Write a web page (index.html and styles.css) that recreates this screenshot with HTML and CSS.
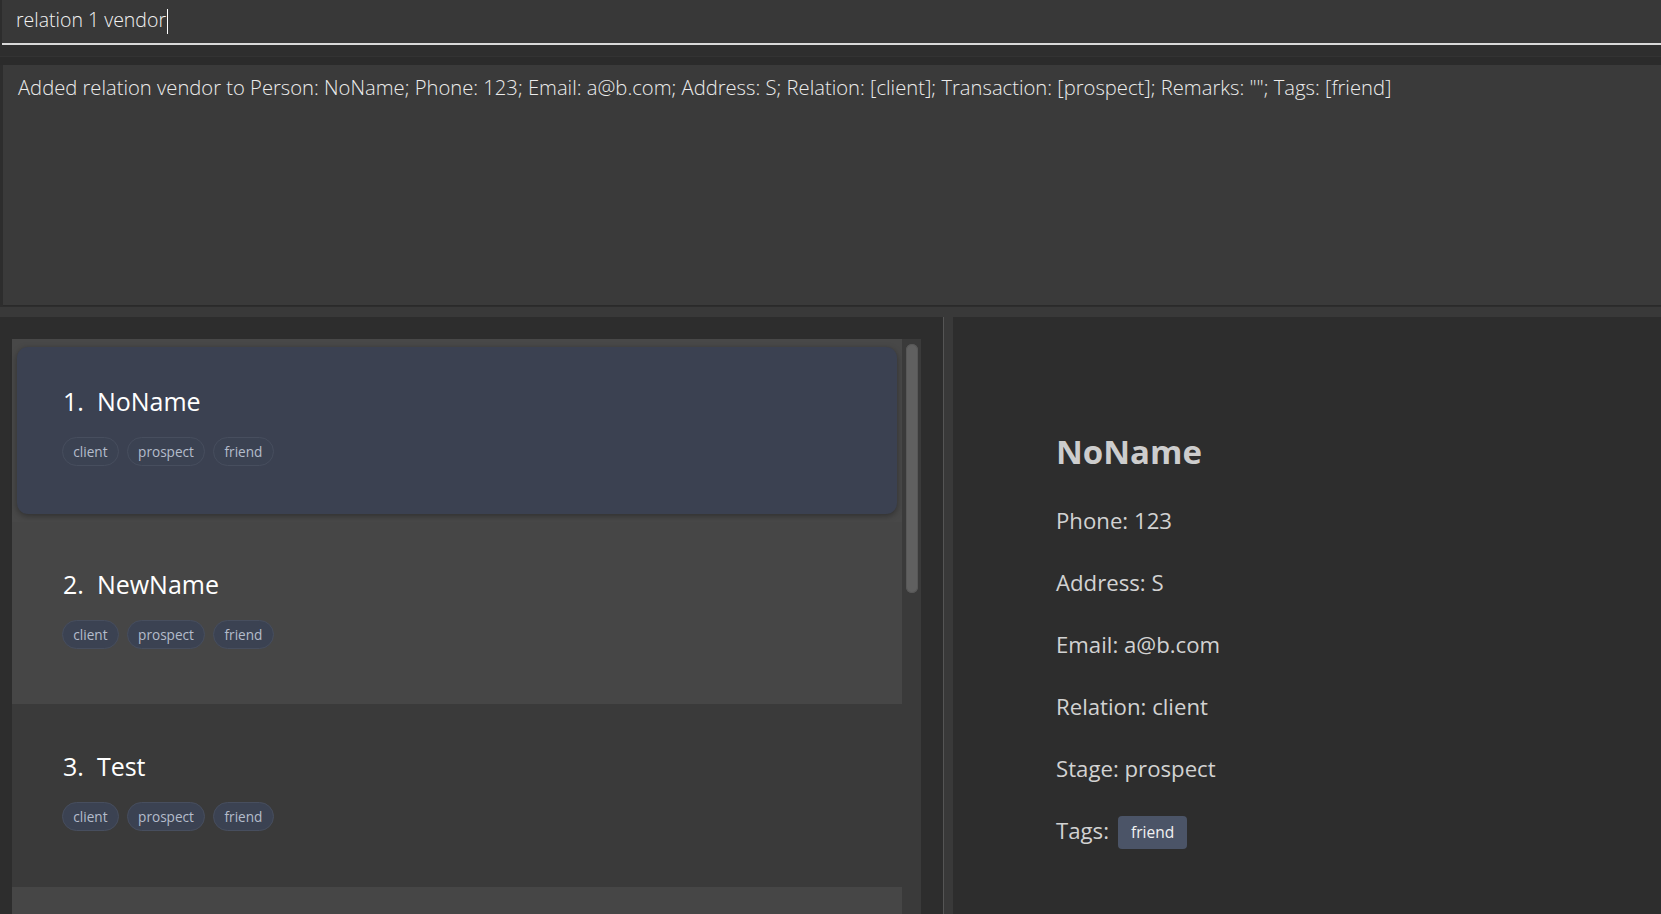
FILE: index.html
```html
<!DOCTYPE html>
<html>
<head>
<meta charset="utf-8">
<link rel="stylesheet" href="styles.css">
</head>
<body>
<div class="app">
  <div class="command-box">
    <span class="command-text">relation 1 vendor</span><span class="caret"></span>
  </div>
  <div class="command-gap"></div>
  <div class="result-wrap">
    <div class="result-box">Added relation vendor to Person: NoName; Phone: 123; Email: a@b.com; Address: S; Relation: [client]; Transaction: [prospect]; Remarks: ""; Tags: [friend]</div>
  </div>
  <div class="split-band"></div>
  <div class="main">
    <div class="left-panel">
      <div class="list-view">
        <div class="cells">
          <div class="cell cell-selected">
            <div class="card card-selected">
              <div class="title"><span class="index">1.</span><span class="name">NoName</span></div>
              <div class="tags">
                <span class="tag">client</span><span class="tag">prospect</span><span class="tag">friend</span>
              </div>
            </div>
          </div>
          <div class="cell cell-even">
            <div class="card">
              <div class="title"><span class="index">2.</span><span class="name">NewName</span></div>
              <div class="tags">
                <span class="tag">client</span><span class="tag">prospect</span><span class="tag">friend</span>
              </div>
            </div>
          </div>
          <div class="cell cell-odd">
            <div class="card">
              <div class="title"><span class="index">3.</span><span class="name">Test</span></div>
              <div class="tags">
                <span class="tag">client</span><span class="tag">prospect</span><span class="tag">friend</span>
              </div>
            </div>
          </div>
          <div class="cell cell-even"></div>
        </div>
        <div class="scroll-track"><div class="scroll-thumb"></div></div>
      </div>
    </div>
    <div class="divider"></div>
    <div class="right-panel">
      <div class="details">
        <div class="detail-name">NoName</div>
        <div class="detail-row">Phone: 123</div>
        <div class="detail-row">Address: S</div>
        <div class="detail-row">Email: a@b.com</div>
        <div class="detail-row">Relation: client</div>
        <div class="detail-row">Stage: prospect</div>
        <div class="detail-row detail-tags">Tags: <span class="detail-tag">friend</span></div>
      </div>
    </div>
  </div>
</div>
</body>
</html>
```

FILE: styles.css
```css
html, body {
  margin: 0;
  padding: 0;
  background: #2d2d2d;
  overflow: hidden;
}
.app {
  width: 1661px;
  height: 914px;
  display: flex;
  flex-direction: column;
  font-family: "Open Sans", "Noto Sans", sans-serif;
  color: #ffffff;
  overflow: hidden;
}
.command-box {
  height: 45px;
  box-sizing: border-box;
  background: #383838;
  border-bottom: 2px solid #d9d9d9;
  margin-left: 2px;
  padding: 6px 0 0 14px;
  display: flex;
  align-items: flex-start;
  flex-shrink: 0;
}
.command-text {
  font-size: 19.5px;
  font-weight: 300;
  line-height: 27px;
  color: #f2f2f2;
}
.caret {
  width: 1px;
  height: 25px;
  margin-top: 3px;
  margin-left: 1px;
  background: #ffffff;
}
.command-gap {
  height: 20px;
  flex-shrink: 0;
  background: #2b2b2b;
  border-top: 11px solid #2e2e2e;
  box-sizing: border-box;
  box-shadow: inset 0 1px 0 #333333;
}
.result-wrap {
  height: 242px;
  flex-shrink: 0;
  padding-left: 3px;
  background: #2d2d2d;
}
.result-box {
  height: 241px;
  background: #3a3a3a;
  box-sizing: border-box;
  padding: 8px 0 0 15px;
  font-size: 20.2px;
  font-weight: 300;
  line-height: 29px;
  color: #ececec;
  white-space: nowrap;
  border-bottom: 1px solid #2a2a2a;
}
.split-band {
  height: 10px;
  flex-shrink: 0;
  background: #393939;
}
.main {
  flex: 1;
  display: flex;
  min-height: 0;
}
.left-panel {
  width: 943px;
  flex-shrink: 0;
  box-sizing: border-box;
  padding: 22px 0 0 12px;
  background: #2d2d2d;
}
.list-view {
  display: flex;
  width: 909px;
  height: 100%;
}
.cells {
  width: 890px;
  display: flex;
  flex-direction: column;
}
.cell {
  height: 182.7px;
  flex-shrink: 0;
  box-sizing: border-box;
  padding: 8px 5px;
}
.cell-selected {
  background: #484848;
}
.cell-even {
  background: #464646;
}
.cell-odd {
  background: #3a3a3a;
}
.card {
  height: 100%;
  box-sizing: border-box;
  padding: 37px 45px 0 45px;
  border-radius: 11px;
}
.card-selected {
  background: #3b4151;
  box-shadow: 0 2px 6px rgba(0, 0, 0, 0.35);
}
.title {
  display: flex;
  font-size: 25px;
  line-height: 34px;
  color: #ffffff;
  padding-left: 1px;
}
.index {
  margin-right: 13px;
}
.tags {
  display: flex;
  gap: 8px;
  margin-top: 19px;
}
.tag {
  height: 29px;
  box-sizing: border-box;
  padding: 0 10.3px;
  border-radius: 15px;
  border: 1px solid #474e5e;
  background: #3b4252;
  color: #b4bccb;
  font-size: 13.6px;
  line-height: 27px;
}
.scroll-track {
  width: 19px;
  flex-shrink: 0;
  background: #3a3a3a;
  box-sizing: border-box;
  padding: 5px 3px 0 4px;
}
.scroll-thumb {
  height: 249px;
  background: #606060;
  border-radius: 6px;
  box-shadow: inset 0 0 0 1px #575757;
}
.divider {
  width: 10px;
  flex-shrink: 0;
  background: #393939;
  border-left: 1px solid #555555;
  box-sizing: border-box;
}
.right-panel {
  flex: 1;
  background: #2d2d2d;
  box-sizing: border-box;
  padding: 112px 0 0 103px;
}
.details {
  display: flex;
  flex-direction: column;
}
.detail-name {
  font-size: 33px;
  font-weight: 700;
  line-height: 45px;
  color: #cdcdcd;
  margin-bottom: 16px;
}
.detail-row {
  font-size: 22.2px;
  line-height: 62px;
  height: 62px;
  color: #d2d2d2;
}
.detail-tags {
  display: flex;
  align-items: center;
  gap: 9px;
}
.detail-tag {
  height: 33px;
  box-sizing: border-box;
  padding: 0 13px;
  border-radius: 4px;
  background: #4b5467;
  color: #f2f2f2;
  font-size: 15.5px;
  line-height: 33px;
  margin-top: 2px;
}
```
